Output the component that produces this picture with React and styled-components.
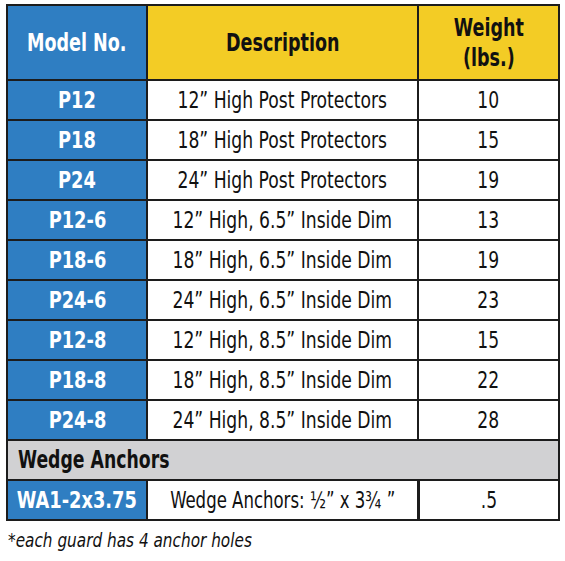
import React from 'react';
import styled, { createGlobalStyle } from 'styled-components';

const GlobalStyle = createGlobalStyle`
  body {
    margin: 0;
    background: #fff;
    font-family: "DejaVu Sans Condensed", "Liberation Sans", sans-serif;
  }
`;

const Wrapper = styled.div`
  padding: 4px 0 0 6px;
  width: 554px;
`;

const Grid = styled.div`
  display: grid;
  grid-template-columns: 138px 269px 139px;
  grid-template-rows: 73px;
  grid-auto-rows: 38px;
  gap: 2px;
  border: 2px solid #1c1c1c;
  background: #1c1c1c;
  width: 550px;
`;

const Cell = styled.div`
  display: flex;
  align-items: center;
  justify-content: center;
  white-space: nowrap;
  background: ${({ $tone }) =>
    $tone === 'blue' ? '#2f7ec2' : $tone === 'yellow' ? '#f3cc25' : '#fff'};
  color: ${({ $tone }) => ($tone === 'blue' ? '#fff' : '#111')};
  font-size: ${({ $size }) => $size || 23}px;
  font-weight: ${({ $tone }) => ($tone ? 700 : 400)};
  line-height: 30px;
  text-align: center;
  box-shadow: ${({ $boxed }) => ($boxed ? 'inset 1px 0 0 #1c1c1c' : 'none')};
`;

// condensed look: the installed fonts are wider than the original one
const Text = styled.span`
  display: inline-block;
  transform: scaleX(${({ $squeeze }) => $squeeze || 0.83});
  transform-origin: ${({ $left }) => ($left ? 'left center' : 'center')};
`;

const Section = styled.div`
  grid-column: 1 / -1;
  display: flex;
  align-items: center;
  padding-left: 10px;
  background: #d1d1d3;
  color: #111;
  font-size: 24px;
  font-weight: 700;
  white-space: nowrap;
`;

const Note = styled.div`
  margin: 7px 0 0 2px;
  font-style: italic;
  font-size: 20px;
  color: #111;
  white-space: nowrap;
`;

const rows = [
  ['P12', '12\u201D High Post Protectors', '10'],
  ['P18', '18\u201D High Post Protectors', '15'],
  ['P24', '24\u201D High Post Protectors', '19'],
  ['P12-6', '12\u201D High, 6.5\u201D Inside Dim', '13'],
  ['P18-6', '18\u201D High, 6.5\u201D Inside Dim', '19'],
  ['P24-6', '24\u201D High, 6.5\u201D Inside Dim', '23'],
  ['P12-8', '12\u201D High, 8.5\u201D Inside Dim', '15'],
  ['P18-8', '18\u201D High, 8.5\u201D Inside Dim', '22'],
  ['P24-8', '24\u201D High, 8.5\u201D Inside Dim', '28'],
];

const App = () => (
  <>
    <GlobalStyle />
    <Wrapper>
      <Grid>
        <Cell $tone="blue" $size={25}>
          <Text $squeeze={0.78}>Model No.</Text>
        </Cell>
        <Cell $tone="yellow" $size={25}>
          <Text $squeeze={0.78}>Description</Text>
        </Cell>
        <Cell $tone="yellow" $size={25}>
          <Text $squeeze={0.78}>
            Weight
            <br />
            (lbs.)
          </Text>
        </Cell>
        {rows.map(([model, desc, weight]) => (
          <React.Fragment key={model}>
            <Cell $tone="blue">
              <Text $squeeze={0.86}>{model}</Text>
            </Cell>
            <Cell>
              <Text>{desc}</Text>
            </Cell>
            <Cell>
              <Text>{weight}</Text>
            </Cell>
          </React.Fragment>
        ))}
        <Section>
          <Text $squeeze={0.8} $left>
            Wedge Anchors
          </Text>
        </Section>
        <Cell $tone="blue">
          <Text $squeeze={0.86}>WA1-2x3.75</Text>
        </Cell>
        <Cell>
          <Text $squeeze={0.8}>Wedge Anchors: {'\u00BD\u201D x 3\u00BE \u201D'}</Text>
        </Cell>
        <Cell $boxed>
          <Text>.5</Text>
        </Cell>
      </Grid>
      <Note>
        <Text $squeeze={0.85} $left>
          *each guard has 4 anchor holes
        </Text>
      </Note>
    </Wrapper>
  </>
);

export default App;
